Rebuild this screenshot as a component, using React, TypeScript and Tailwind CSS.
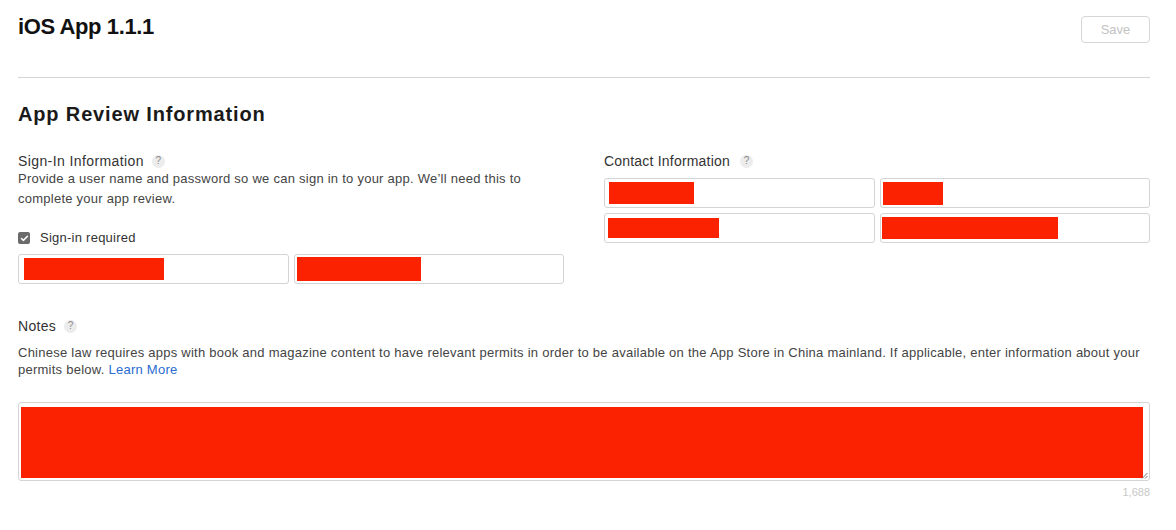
import { Check } from "lucide-react";

/* Small grey "?" help badge used next to section labels */
function Help() {
  return (
    <span className="inline-flex h-[13px] w-[13px] items-center justify-center rounded-full bg-[#ececec] text-[10px] leading-none tracking-normal text-[#8a8a8a]">
      ?
    </span>
  );
}

/* Input box with a redacted (red) value inside */
function Field({ redact, pad = "pl-[5px]", h = "h-[22px]" }: { redact: string; pad?: string; h?: string }) {
  return (
    <div className={`flex h-[30px] items-center rounded-[3px] border border-[#d4d4d4] bg-white ${pad}`}>
      <div className={`${redact} ${h} bg-[#fa2200]`} />
    </div>
  );
}

export default function App() {
  return (
    <div className="min-h-[530px] bg-white pl-[18px] pr-[26px] pt-[14px] font-['Liberation_Sans',Arial,sans-serif] text-[#333]">
      {/* Header */}
      <div className="flex items-start justify-between">
        <h1 className="text-[22px] font-bold leading-[26px] tracking-[-0.4px] text-[#111]">iOS App 1.1.1</h1>
        <button className="mt-[2px] h-[27px] w-[69px] rounded-[4px] border border-[#d6d6d6] text-[13px] text-[#c3c3c3]">
          Save
        </button>
      </div>

      <div className="mt-[34px] h-px bg-[#d4d4d4]" />

      <h2 className="mt-[24px] text-[20px] font-bold leading-[24px] tracking-[0.85px] text-[#1a1a1a]">
        App Review Information
      </h2>

      {/* Two columns */}
      <div className="mt-[26px] grid grid-cols-2 gap-[40px]">
        <div>
          <div className="flex items-center gap-[8px] text-[14px] leading-[18px] tracking-[0.4px] text-[#333]">
            Sign-In Information <Help />
          </div>
          <p className="-mt-px w-[530px] text-[13px] leading-[20px] tracking-[0.25px] text-[#444]">
            Provide a user name and password so we can sign in to your app. We’ll need this to complete your app review.
          </p>
          <label className="mt-[20px] flex items-center gap-[10px] text-[13px] leading-[18px] tracking-[0.25px] text-[#333]">
            <span className="flex h-[12px] w-[12px] items-center justify-center rounded-[2px] bg-[#6b6b6b]">
              <Check className="h-[9px] w-[9px] text-white" strokeWidth={4} />
            </span>
            Sign-in required
          </label>
          <div className="mt-[7px] grid grid-cols-2 gap-[5px]">
            <Field redact="w-[140px]" pad="pl-[5px]" />
            <Field redact="w-[124px]" pad="pl-[2px]" h="h-[24px]" />
          </div>
        </div>

        <div>
          <div className="flex items-center gap-[10px] text-[14px] leading-[18px] tracking-[0.2px] text-[#333]">
            Contact Information <Help />
          </div>
          <div className="mt-[8px] grid grid-cols-2 gap-[5px]">
            <Field redact="w-[85px]" pad="pl-[4px]" />
            <Field redact="w-[60px]" pad="pl-[2px]" h="h-[23px]" />
            <Field redact="w-[111px]" pad="pl-[3px]" h="h-[20px]" />
            <Field redact="w-[176px]" pad="pl-[1px]" />
          </div>
        </div>
      </div>

      {/* Notes */}
      <div className="mt-[33px] flex items-center gap-[8px] text-[14px] leading-[18px] tracking-[0.3px] text-[#333]">
        Notes <Help />
      </div>
      <p className="mt-[9px] text-[13px] leading-[17px] tracking-[0.25px] text-[#444]">
        Chinese law requires apps with book and magazine content to have relevant permits in order to be available on the App Store in China mainland. If applicable, enter information about your permits below.{" "}
        <a className="text-[#2a6ccf]">Learn More</a>
      </p>

      <div className="relative mt-[24px] h-[79px] rounded-[3px] border border-[#d4d4d4] bg-white p-[4px_6px_2px_2px]">
        <div className="h-full w-full bg-[#fa2200]" />
        <svg className="absolute bottom-[1px] right-[1px]" width="7" height="7" viewBox="0 0 7 7">
          <path d="M6.5 1 L1 6.5 M6.5 4 L4 6.5" stroke="#777" strokeWidth="1" />
        </svg>
      </div>
      <div className="mt-[4px] text-right text-[11px] leading-[14px] text-[#c8c8c8]">1,688</div>
    </div>
  );
}
